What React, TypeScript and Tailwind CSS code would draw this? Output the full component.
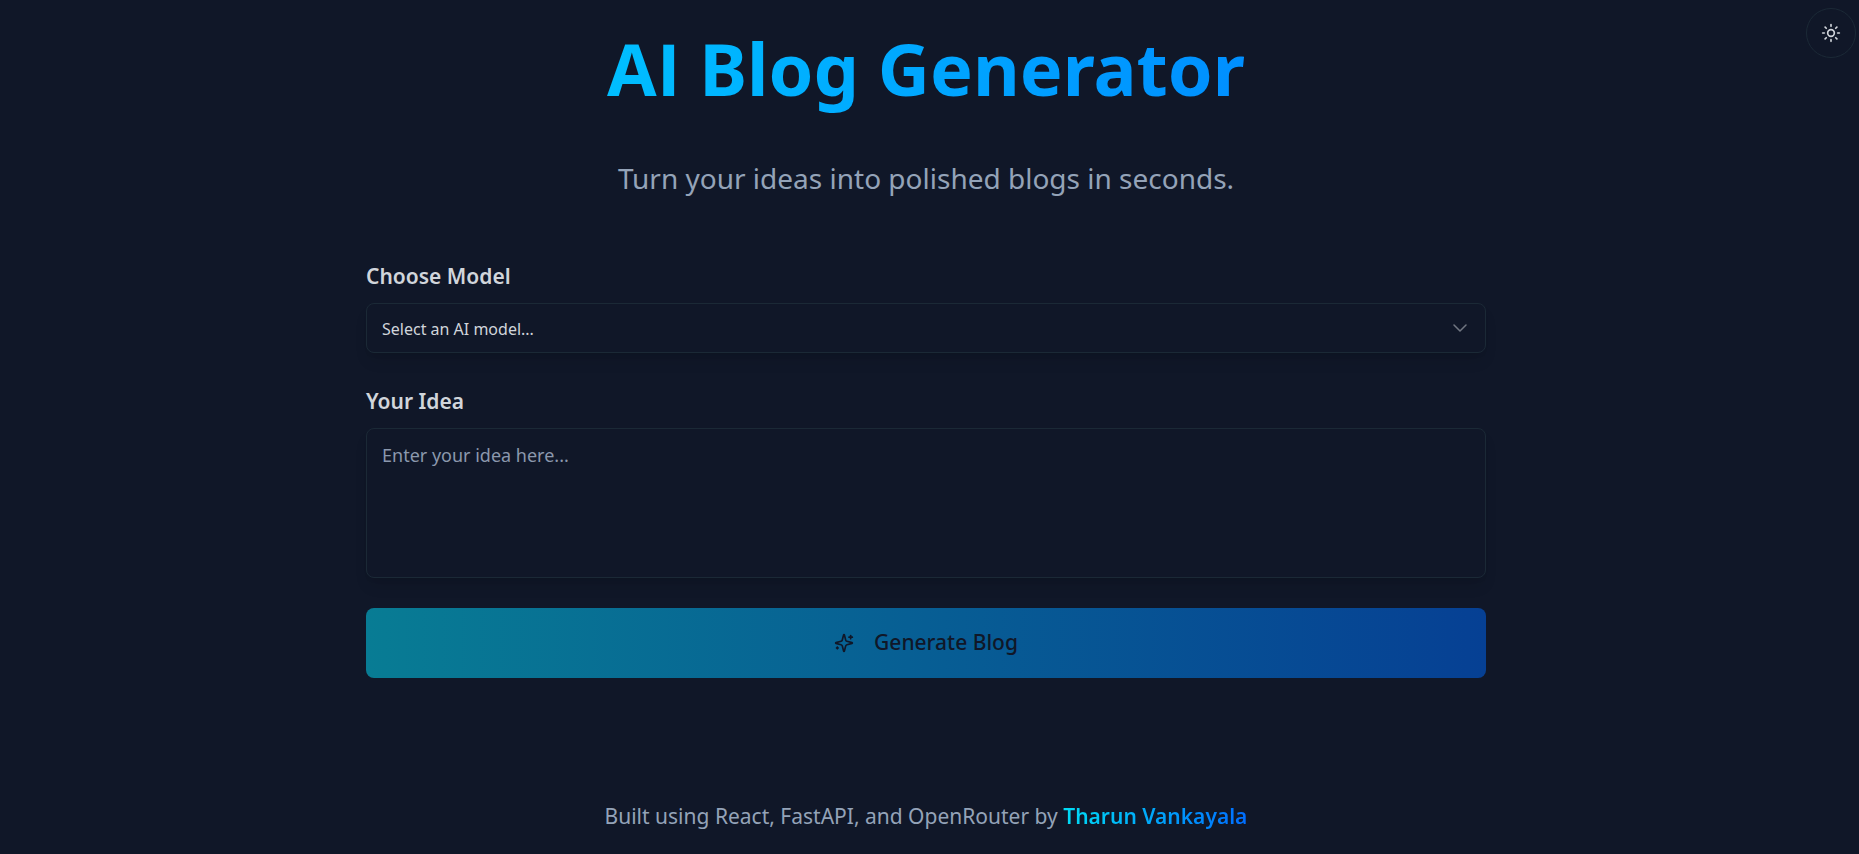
import { useState } from "react";
import { ChevronDown, Sun } from "lucide-react";

function SparklesIcon() {
  return (
    <svg
      className="size-5"
      viewBox="0 0 24 24"
      fill="none"
      stroke="currentColor"
      strokeWidth="2"
      strokeLinecap="round"
      strokeLinejoin="round"
      aria-hidden="true"
    >
      <path d="M9.937 15.5A2 2 0 0 0 8.5 14.063l-6.135-1.582a.5.5 0 0 1 0-.962L8.5 9.936A2 2 0 0 0 9.937 8.5l1.582-6.135a.5.5 0 0 1 .963 0L14.063 8.5A2 2 0 0 0 15.5 9.937l6.135 1.581a.5.5 0 0 1 0 .964L15.5 14.063a2 2 0 0 0-1.437 1.437l-1.582 6.135a.5.5 0 0 1-.963 0z" />
      <path d="M20 3v4" />
      <path d="M22 5h-4" />
      <path d="M4 17v2" />
      <path d="M5 18H3" />
    </svg>
  );
}

export default function App() {
  const [model, setModel] = useState("");
  const [idea, setIdea] = useState("");

  return (
    <div className="relative min-h-screen bg-[#101728] pr-[7px] font-['Noto_Sans','Open_Sans',sans-serif] text-[#d1d5db]">
      <button
        type="button"
        aria-label="Toggle theme"
        className="absolute top-2 right-[3px] flex size-[50px] items-center justify-center rounded-full border border-[#1b2936]"
      >
        <Sun className="size-5" strokeWidth={2} />
      </button>

      <main className="mx-auto flex max-w-6xl flex-col px-4 pt-[22px]">
        <h1 className="bg-linear-to-r/srgb from-[#00d0ff] to-[#007dff] bg-clip-text text-center text-[72px] leading-[92px] font-bold text-transparent">
          <span className="font-['Open_Sans',sans-serif]">AI</span> Blog Generator
        </h1>
        <p className="mt-10 text-center text-[28px] leading-[48px] text-[#94a3b8]">
          Turn your ideas into polished blogs in seconds.
        </p>

        <form className="mt-[58px] flex flex-col" onSubmit={(e) => e.preventDefault()}>
          <label htmlFor="model" className="text-[21px] leading-8 font-semibold">
            Choose Model
          </label>
          <div className="mt-[11px] grid items-center">
            <select
              id="model"
              value={model}
              onChange={(e) => setModel(e.target.value)}
              className="col-start-1 row-start-1 h-[50px] w-full appearance-none rounded-lg border border-[#1b2936] px-[15px] pt-[2px] text-[16px] shadow-lg"
            >
              <option value="">Select an AI model...</option>
            </select>
            <ChevronDown className="pointer-events-none col-start-1 row-start-1 mr-[14px] size-6 justify-self-end opacity-50" strokeWidth={1.5} />
          </div>

          <label htmlFor="idea" className="mt-8 text-[21px] leading-8 font-semibold">
            Your Idea
          </label>
          <textarea
            id="idea"
            value={idea}
            onChange={(e) => setIdea(e.target.value)}
            placeholder="Enter your idea here..."
            className="mt-[11px] h-[150px] w-full resize-none rounded-lg border border-[#1b2936] px-[15px] py-3 text-[18px] leading-7 shadow-lg placeholder:text-[#8b98ad]"
          />

          <button
            type="submit"
            className="mt-[30px] flex h-[70px] items-center justify-center gap-5 rounded-lg bg-linear-to-r/srgb from-[#087c94] to-[#064094] text-[21px] font-medium text-[#101728]"
          >
            <SparklesIcon />
            Generate Blog
          </button>
        </form>

        <footer className="mt-[122px] pb-5 text-center text-[21px] leading-8 text-[#94a3b8]">
          Built using React, FastAPI, and OpenRouter by{" "}
          <a href="#author" className="bg-linear-to-r/srgb from-[#00dcf5] to-[#006dff] bg-clip-text font-semibold text-transparent">
            Tharun Vankayala
          </a>
        </footer>
      </main>
    </div>
  );
}
